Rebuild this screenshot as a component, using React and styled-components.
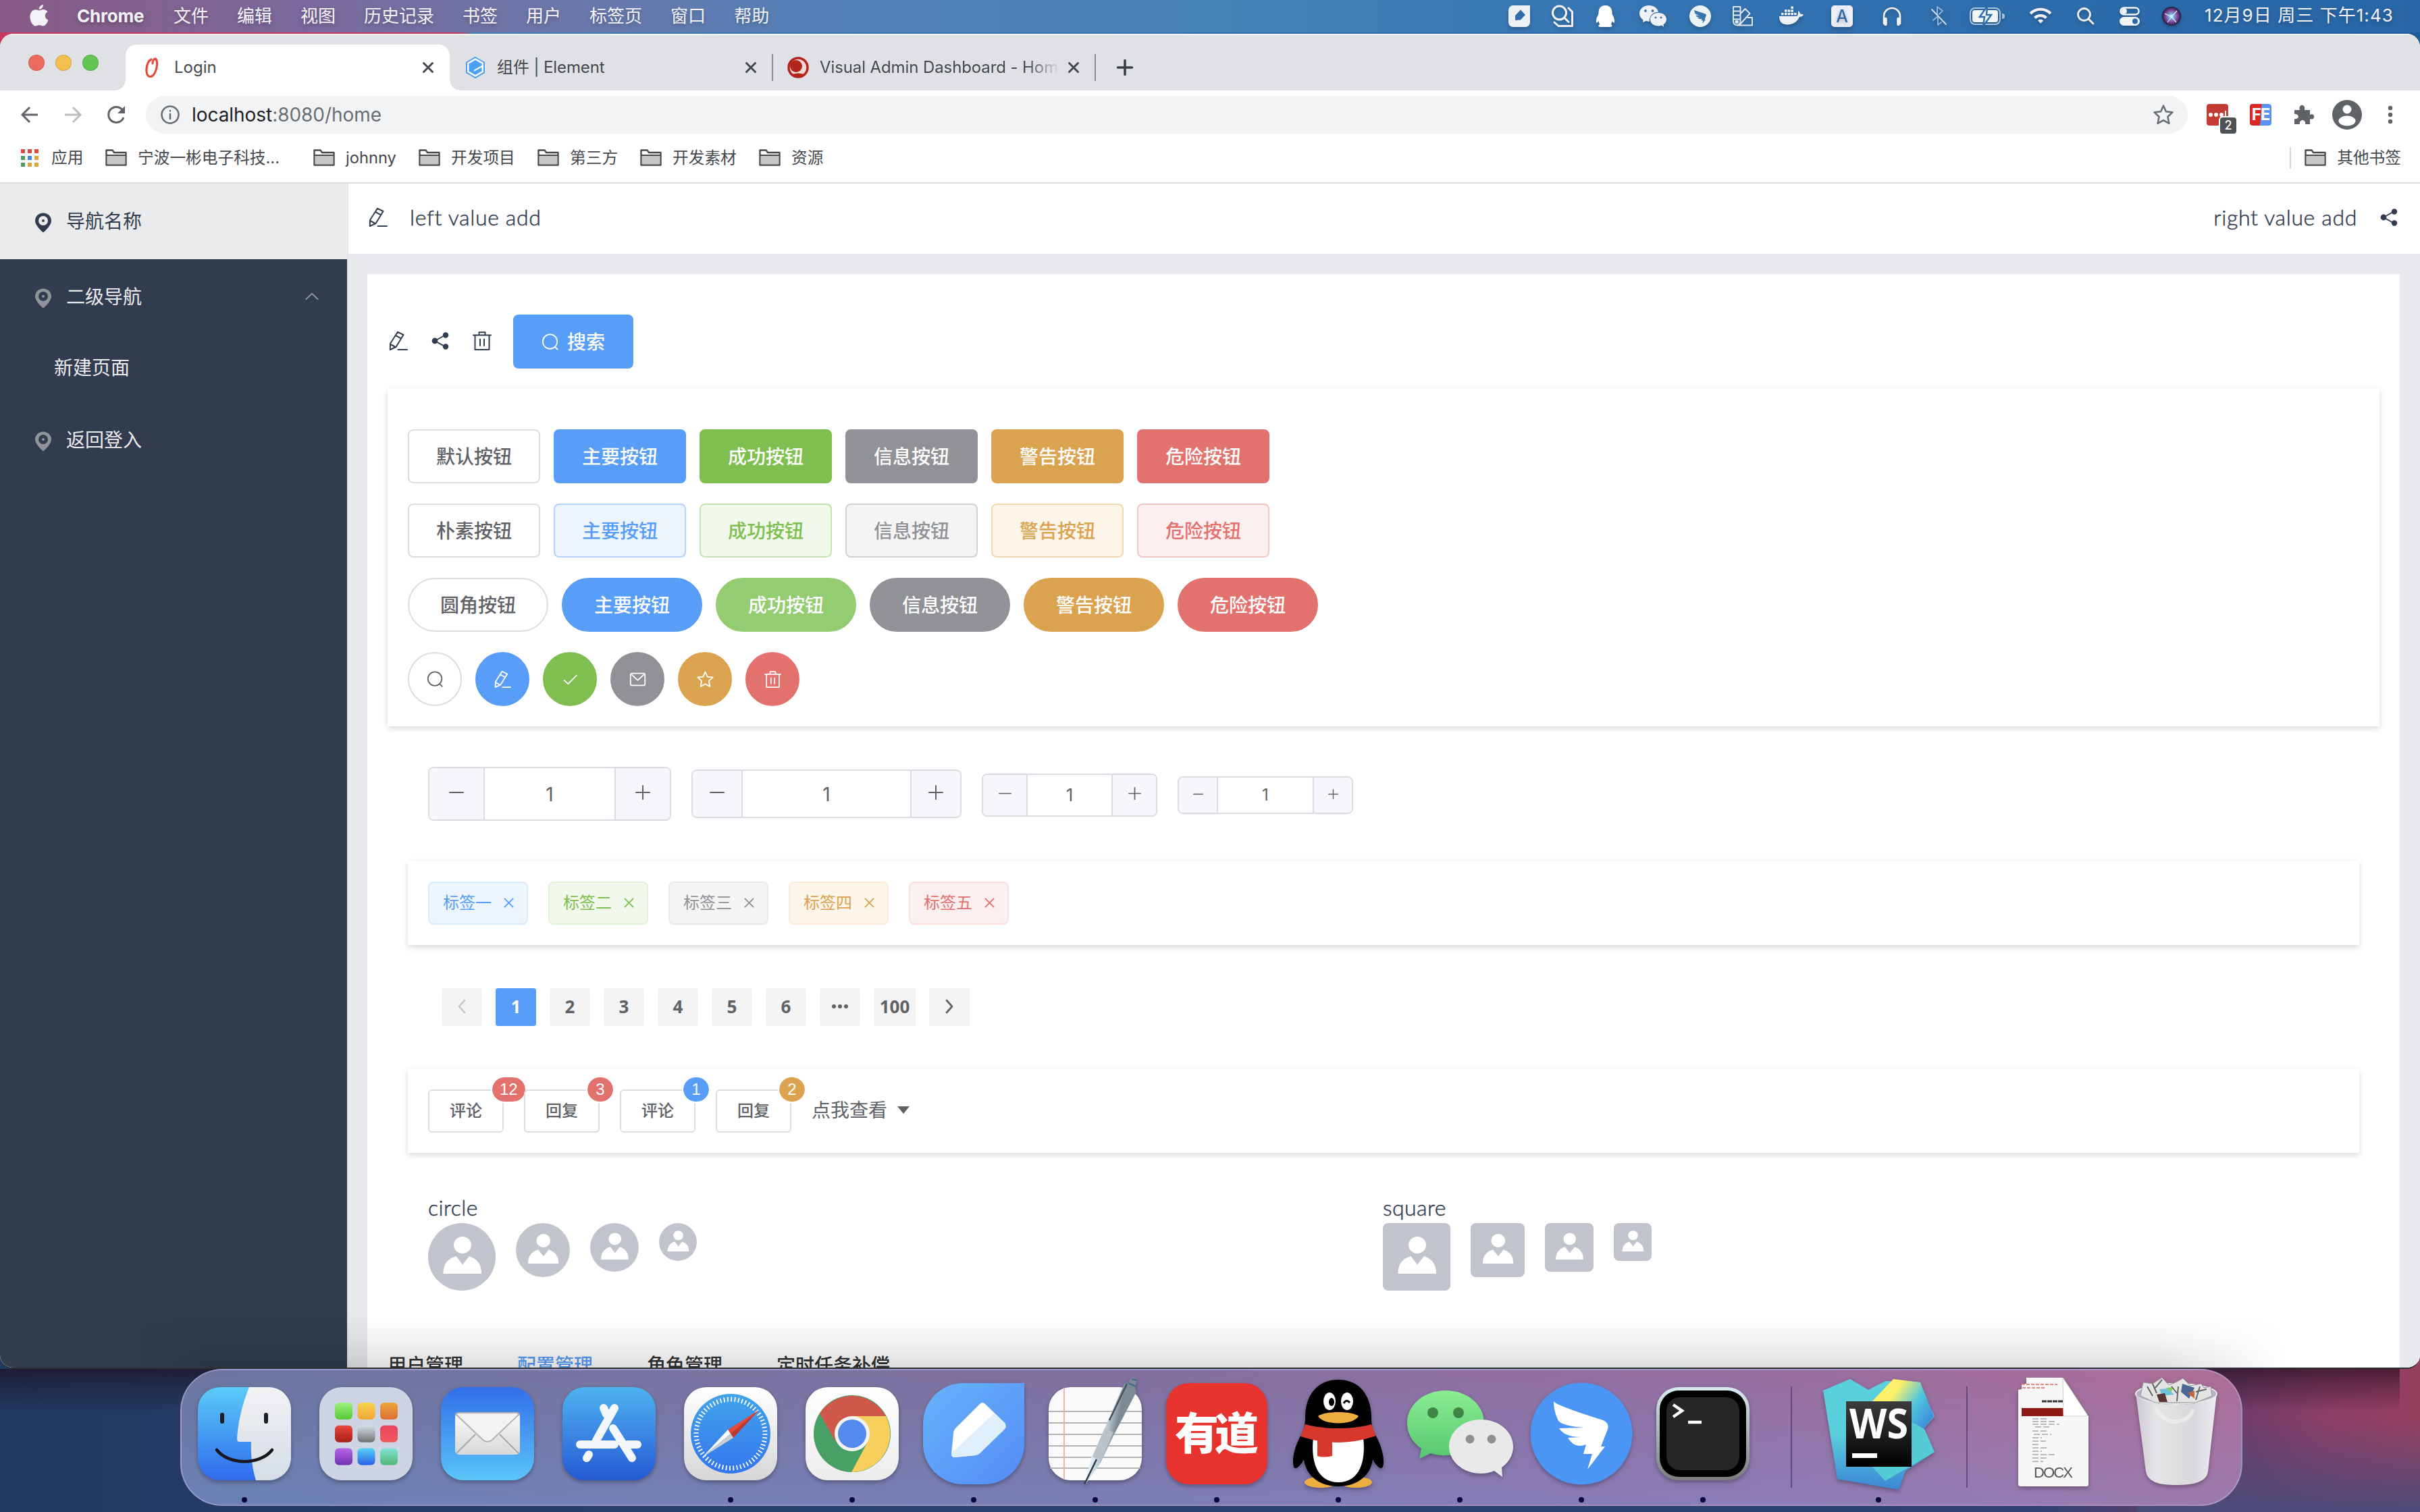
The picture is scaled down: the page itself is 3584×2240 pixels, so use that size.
import React from "react";
import styled, { createGlobalStyle, css } from "styled-components";

const ui = `Inter, "Noto Sans CJK SC", sans-serif`;
const avenir = `Lato, "Noto Sans CJK SC", sans-serif`;

const Global = createGlobalStyle`
  * { box-sizing: border-box; }
  html, body { margin: 0; padding: 0; overflow: hidden; }
  body { font-family: ${ui}; }
  svg { display: block; flex: none; overflow: visible; }
`;

const Desktop = styled.div`
  width: 3584px;
  height: 2240px;
  display: flex;
  flex-direction: column;
  overflow: hidden;
  background:
    linear-gradient(90deg, #c8385f 0 680px, #3d7cb4 700px, #1f5c9c 100%) 0 0 / 100% 130px no-repeat,
    linear-gradient(180deg, rgba(28, 10, 24, 0.62), rgba(28, 10, 24, 0.45) 14px, rgba(28, 10, 24, 0) 64px) 0 2028px / 3554px 212px no-repeat,
    linear-gradient(180deg, rgba(74, 74, 122, 0) 35%, rgba(72, 76, 122, 0.95) 100%) 100% 2028px / 420px 212px no-repeat,
    linear-gradient(90deg, #22395f 0, #27416d 30%, #2f4272 84%, #6b3c68 92%, #8a3e66 96%, #97405f 100%) 0 1900px / 100% 340px no-repeat;
`;

const MenuBar = styled.header`
  height: 48px;
  flex: none;
  display: flex;
  align-items: center;
  padding: 0 38px 0 44px;
  background: linear-gradient(90deg, #895a86 0, #7a699a 12%, #6b78ab 24%, #5580b6 33%, #4682b5 50%, #3878b5 63%, #2f6fae 80%, #2866a6 100%);
  color: #f4f2f7;
  font-size: 26px;
  line-height: 36px;
  text-shadow: 0 3px 6px rgba(0, 0, 0, 0.25);
  white-space: nowrap;
  > svg { margin-bottom: 3px; }
`;

const Menus = styled.nav`
  display: flex;
  gap: 42px;
  margin: 0 0 1px 42px;
`;

const AppName = styled.span`
  width: 101px;
  font-weight: 700;
  letter-spacing: -0.2px;
`;

const Status = styled.div`
  display: flex;
  align-items: center;
  margin-left: auto;
`;

const StatusSlot = styled.span`
  display: block;
  width: ${(p) => p.$w || 32}px;
  margin-left: ${(p) => p.$gap}px;
  filter: drop-shadow(0 3px 3px rgba(0, 0, 0, 0.25));
`;

const Clock = styled.span`
  width: 281px;
  margin: 0 0 2px 35px;
  letter-spacing: 1.05px;
`;

const Window = styled.main`
  position: relative;
  width: 3584px;
  height: 1978px;
  margin-top: 2px;
  flex: none;
  display: flex;
  flex-direction: column;
  border-radius: 20px;
  overflow: hidden;
  background: #fff;
  border-bottom: 2px solid #2f3033;
  &::after {
    content: "";
    position: absolute;
    left: 200px;
    right: 200px;
    bottom: 0;
    height: 76px;
    background: linear-gradient(180deg, rgba(0, 0, 0, 0), rgba(0, 0, 0, 0.05) 50%, rgba(0, 0, 0, 0.13));
    mask-image: linear-gradient(90deg, transparent, #000 110px calc(100% - 190px), transparent);
  }
`;

const TabStrip = styled.div`
  height: 84px;
  flex: none;
  display: flex;
  align-items: flex-end;
  background: #dfe1e5;
  border-top: 2px solid #f2f3f5;
`;

const Lights = styled.div`
  width: 186px;
  height: 68px;
  display: flex;
  gap: 16px;
  padding: 15px 0 0 42px;
`;

const Light = styled.i`
  width: 24px;
  height: 24px;
  border-radius: 50%;
  background: ${(p) => p.$c};
  border: 1px solid rgba(0, 0, 0, 0.12);
`;

const Tab = styled.div`
  position: relative;
  width: ${(p) => p.$w}px;
  height: 68px;
  display: flex;
  align-items: center;
  padding: 0 ${(p) => p.$pr}px 0 ${(p) => p.$pl}px;
  color: #45484c;
  font-size: 24px;
  line-height: 34px;
  ${(p) =>
    p.$active &&
    css`
      background: #fff;
      border-radius: 16px 16px 0 0;
      &::before, &::after {
        content: "";
        position: absolute;
        bottom: 0;
        width: 16px;
        height: 16px;
      }
      &::before { left: -16px; background: radial-gradient(circle at 0 0, transparent 15.5px, #fff 16px); }
      &::after { right: -16px; background: radial-gradient(circle at 100% 0, transparent 15.5px, #fff 16px); }
    `}
`;

const TabTitle = styled.span`
  flex: 1;
  margin: 0 12px 0 16px;
  overflow: hidden;
  white-space: nowrap;
  letter-spacing: ${(p) => p.$ls || 0}px;
  ${(p) => p.$fade && css`mask-image: linear-gradient(90deg, #000 calc(100% - 50px), transparent);`}
`;

const TabRule = styled.i`
  width: 2px;
  height: 40px;
  margin-bottom: 14px;
  background: #8d9095;
`;

const NewTab = styled.div`
  height: 68px;
  display: flex;
  align-items: center;
  padding-left: 31px;
`;

const AddressBar = styled.div`
  height: 72px;
  flex: none;
  display: flex;
  align-items: center;
  padding: 0 28px;
`;

const NavIcons = styled.div`
  width: 188px;
  display: flex;
  gap: 32px;
`;

const Omnibox = styled.div`
  width: 3024px;
  height: 56px;
  display: flex;
  align-items: center;
  border-radius: 28px;
  padding: 0 21px 0 21px;
  background: #f1f3f4;
  color: #6a6e73;
  font-size: 28px;
  line-height: 40px;
  svg:last-child { margin-left: auto; }
`;

const Url = styled.span`
  margin-left: 17px;
  letter-spacing: -0.05px;
  b { color: #202124; font-weight: 400; }
`;

const Extensions = styled.div`
  display: flex;
  align-items: center;
  margin-left: 28px;
`;

const ExtBox = styled.div`
  position: relative;
  width: 32px;
  height: 32px;
  margin-right: 32px;
  border-radius: 4px;
  background: ${(p) => p.$bg};
  color: #fff;
  font-size: 24px;
  line-height: 32px;
  text-align: center;
  font-weight: 700;
  letter-spacing: -1px;
`;

const ExtBadge = styled.span`
  position: absolute;
  left: 20px;
  top: 20px;
  width: 24px;
  height: 24px;
  border-radius: 4px;
  background: #4f5255;
  box-shadow: 0 0 0 2px #fff;
  font-size: 18px;
  line-height: 24px;
  font-weight: 500;
  letter-spacing: 0;
`;

const Bookmarks = styled.div`
  height: 66px;
  flex: none;
  display: flex;
  align-items: center;
  padding: 0 28px 8px 30px;
  border-bottom: 2px solid #dcdde0;
  color: #45484c;
  font-size: 23.7px;
  line-height: 34px;
  white-space: nowrap;
`;

const Bookmark = styled.span`
  display: flex;
  align-items: center;
  gap: ${(p) => p.$gap || 16}px;
  width: ${(p) => p.$w}px;
`;

const OtherBookmarks = styled.span`
  display: flex;
  align-items: center;
  gap: 16px;
  margin-left: auto;
  padding-left: 20px;
  height: 32px;
  border-left: 2px solid #d3d5d8;
`;

const Page = styled.div`
  flex: 1;
  min-height: 0;
  display: flex;
  background: #e8e9ed;
`;

const Sidebar = styled.aside`
  width: 514px;
  flex: none;
  background: #313d4f;
`;

const NavItem = styled.div`
  height: ${(p) => (p.$sub ? 100 : 112)}px;
  display: flex;
  align-items: center;
  gap: 22px;
  padding: 0 40px ${(p) => (p.$sub ? 2 : 0)}px ${(p) => (p.$sub ? 80 : 52)}px;
  font-size: 28px;
  line-height: 40px;
  color: #ececee;
  svg:first-child { margin-top: 4px; }
  svg:last-child:not(:first-child) { margin-left: auto; }
  ${(p) =>
    p.$brand &&
    css`
      background: #e9ebec;
      color: #313d4f;
    `}
`;

const Main = styled.section`
  width: 3070px;
  border-left: 2px solid #e4e5e9;
  display: flex;
  flex-direction: column;
`;

const PageHeader = styled.div`
  height: 104px;
  flex: none;
  display: flex;
  align-items: center;
  justify-content: space-between;
  padding: 0 32px 5px 30px;
  background: #fff;
  font-family: ${avenir};
  font-size: 32px;
  font-weight: 300;
  -webkit-text-stroke: 0.5px currentColor;
  color: #313d4f;
`;

const HeaderSide = styled.div`
  display: flex;
  align-items: center;
  gap: 33px;
  letter-spacing: 0.65px;
`;

const Panel = styled.div`
  width: 3010px;
  flex: 1;
  min-height: 0;
  margin: 30px 0 0 28px;
  padding: 60px 30px 0;
  overflow: hidden;
  background: #fff;
  color: #313d4f;
`;

const Row = styled.div`
  display: flex;
  align-items: ${(p) => p.$align || "center"};
  gap: ${(p) => p.$gap || 0}px;
  margin: ${(p) => p.$m || 0};
  > svg { margin-bottom: ${(p) => p.$lift || 0}px; }
`;

const Card = styled.div`
  display: flex;
  flex-direction: ${(p) => (p.$column ? "column" : "row")};
  gap: 30px;
  height: ${(p) => p.$h}px;
  margin: ${(p) => p.$m};
  padding: ${(p) => p.$p};
  background: #fff;
  box-shadow: 0 4px 8px rgba(0, 0, 0, 0.12), 0 0 12px rgba(0, 0, 0, 0.04);
`;

const tones = {
  default: { c: "#606266", bg: "#fff", bd: "#dcdde4" },
  primary: { c: "#589df8", bg: "#ecf4fe", bd: "#b3d4fb", tag: "#dbe9fd" },
  success: { c: "#7fbf50", bg: "#f1f8ec", bd: "#c6e4b3", tag: "#e2f2d9" },
  info: { c: "#919297", bg: "#f4f4f4", bd: "#d1d2d5", tag: "#e8e9eb" },
  warning: { c: "#dba350", bg: "#fdf5ea", bd: "#f0d8b0", tag: "#f9ecd8" },
  danger: { c: "#e3726e", bg: "#fcefef", bd: "#f2c6c5", tag: "#fae1e0" },
};

const Button = styled.button`
  height: 80px;
  width: ${(p) => (p.$circle ? 80 : p.$round ? 208 : 196)}px;
  padding: ${(p) => (p.$circle ? 0 : 1)}px 0 0;
  display: flex;
  align-items: center;
  justify-content: center;
  gap: 12px;
  border: 2px solid;
  border-radius: ${(p) => (p.$round || p.$circle ? 40 : 8)}px;
  font: 500 28px/40px ${ui};
  color: ${(p) => (p.$plain || p.$tone === "default" ? tones[p.$tone].c : "#fff")};
  background: ${(p) => (p.$plain || p.$tone === "default" ? tones[p.$tone].bg : p.$light ? "#94cc72" : tones[p.$tone].c)};
  border-color: ${(p) => (p.$plain || p.$tone === "default" ? tones[p.$tone].bd : p.$light ? "#94cc72" : tones[p.$tone].c)};
`;

const SearchButton = styled(Button)`
  width: 178px;
  margin-left: 4px;
`;

const Stepper = styled.div`
  display: grid;
  grid-template-columns: ${(p) => p.$b}px 1fr ${(p) => p.$b}px;
  width: ${(p) => p.$w}px;
  height: ${(p) => p.$h}px;
  margin-top: ${(p) => p.$mt}px;
  border: 2px solid #dcdde4;
  border-radius: 8px;
  overflow: hidden;
  color: #606266;
`;

const StepKey = styled.span`
  display: flex;
  align-items: center;
  justify-content: center;
  padding-bottom: ${(p) => p.$lift}px;
  background: #f5f7fb;
  border: 0 solid #dcdde4;
  border-${(p) => p.$side}-width: 2px;
`;

const StepValue = styled.span`
  display: flex;
  align-items: center;
  justify-content: center;
  padding-top: ${(p) => p.$drop}px;
  font: 400 ${(p) => p.$fs}px/36px ${ui};
`;

const Tag = styled.span`
  width: 148px;
  height: 64px;
  display: flex;
  align-items: center;
  gap: 18px;
  padding: 0 0 1px 20px;
  font-size: 24px;
  line-height: 34px;
  border: 2px solid ${(p) => tones[p.$tone].tag};
  border-radius: 8px;
  color: ${(p) => tones[p.$tone].c};
  background: ${(p) => tones[p.$tone].bg};
`;

const PageKey = styled.span`
  width: ${(p) => p.$w || 60}px;
  height: 56px;
  display: flex;
  align-items: center;
  justify-content: center;
  padding-bottom: 2px;
  border-radius: 4px;
  font: 700 26px/36px "Open Sans", sans-serif;
  color: ${(p) => (p.$active ? "#fff" : "#606266")};
  background: ${(p) => (p.$active ? "#589df8" : "#f4f4f5")};
`;

const BadgeButton = styled.div`
  position: relative;
  width: 112px;
  height: 64px;
  display: flex;
  align-items: center;
  justify-content: center;
  border: 2px solid #dcdde4;
  border-radius: 6px;
  font-size: 24px;
  font-weight: 500;
  line-height: 34px;
  color: #606266;
`;

const Badge = styled.sup`
  position: absolute;
  top: -20px;
  left: ${(p) => p.$x}px;
  min-width: 38px;
  height: 36px;
  padding: 0 ${(p) => (p.$wide ? 11 : 10)}px;
  border-radius: 18px;
  text-align: center;
  font: 400 24px/36px "Liberation Sans", sans-serif;
  color: #fff;
  background: ${(p) => tones[p.$tone].c};
  outline: 2px solid #fff;
`;

const Dropdown = styled.span`
  display: flex;
  align-items: center;
  gap: 15px;
  height: 61px;
  font-size: 28px;
  line-height: 40px;
  color: #606266;
`;

const AvatarGroup = styled.div`
  width: 1414px;
  font-family: ${avenir};
  font-size: 32px;
  font-weight: 300;
  -webkit-text-stroke: 0.5px currentColor;
  line-height: 44px;
  letter-spacing: 0.4px;
`;

const GroupName = styled.div`
  height: 44px;
  line-height: 41px;
`;

const Avatar = styled.div`
  width: ${(p) => p.$s}px;
  height: ${(p) => p.$s}px;
  border-radius: ${(p) => (p.$square ? "8px" : "50%")};
  background: #c1c4cc;
`;

const TabLabel = styled.span`
  font-size: 28px;
  font-weight: 500;
  line-height: 40px;
  color: ${(p) => (p.$active ? "#589df8" : "#303133")};
`;

const Dock = styled.footer`
  width: 3054px;
  height: 203px;
  flex: none;
  margin-left: 267px;
  padding: 0 0 0 3px;
  display: flex;
  border: 2px solid rgba(190, 180, 225, 0.5);
  border-radius: 62px;
  background:
    linear-gradient(180deg, rgba(110, 90, 130, 0.12), rgba(105, 145, 215, 0.35)),
    linear-gradient(90deg, #6b79a3 0, #7a77a4 22%, #8174a2 42%, #9272a4 60%, #9b71a4 75%, #b76f98 100%);
`;

const DockSlot = styled.div`
  width: 180px;
  height: 198px;
  display: flex;
  flex-direction: column;
  align-items: center;
  padding-top: 12px;
`;

const Running = styled.i`
  width: 8px;
  height: 8px;
  margin-top: 12px;
  border-radius: 50%;
  background: #06063a;
`;

const DockRule = styled.i`
  width: 2px;
  height: 150px;
  margin: 24px 38px 0 40px;
  background: rgba(60, 40, 100, 0.55);
`;

/* ---------- line icons ---------- */
const Svg = ({ w = 28, h, vb = "0 0 28 28", children, sw = 2, fill = "none", stroke = "currentColor" }) => (
  <svg width={w} height={h || w} viewBox={vb} fill={fill} stroke={stroke} strokeWidth={sw} strokeLinejoin="round" strokeLinecap="round">
    {children}
  </svg>
);
const Edit = ({ s = 28 }) => (
  <Svg w={s}>
    <path d="M13 .8 21.500 5 10.500 23 1.800 27 2 18ZM10 6 18 10.400M3 19.500 9.500 23M13.500 27H27" />
  </Svg>
);
const Share = ({ s = 28 }) => (
  <Svg w={s}>
    <path d="M22 5 6 14 22 23" />
    <g fill="currentColor" stroke="none"><circle cx="22" cy="5.5" r="4.2" /><circle cx="6" cy="14" r="4.4" /><circle cx="22" cy="22.5" r="4.2" /></g>
  </Svg>
);
const Trash = ({ s = 28 }) => (
  <Svg w={s}>
    <path d="M1 5.500H27M9.500 5V1.200H18.500V5M3.500 6V27H24.500V6M11 11.500V21M17 11.500V21" />
  </Svg>
);
const Search = ({ s = 28 }) => (
  <Svg w={s}><circle cx="13.5" cy="13" r="11.5" /><path d="M21.5 21.5 25.5 25.5" /></Svg>
);
const Check = ({ s = 28 }) => <Svg w={s}><path d="M4 15.5 10.5 21.5 24.5 7.5" /></Svg>;
const Mail = ({ s = 28 }) => (
  <Svg w={s}><rect x="2" y="4" width="24" height="20" rx="2.5" /><path d="M4.5 6.5 14 15.5 23.5 6.5" /></Svg>
);
const Star = ({ s = 28, sw = 2 }) => (
  <Svg w={s} sw={sw}><path d="M14 1.5 17.6 9.6 26.5 10.6 20 16.8 21.8 26 14 21.6 6.2 26 8 16.8 1.5 10.6 10.4 9.6Z" /></Svg>
);
const Pin = ({ c, hole }) => (
  <svg width="24" height="30" viewBox="0 0 24 30">
    <path d="M12 .5C5.4 .5 0 5.5 0 12 0 20 12 29.5 12 29.5S24 20 24 12C24 5.5 18.6 .5 12 .5Z" fill={c} />
    <circle cx="12" cy="12" r="7" fill={hole} /><circle cx="12" cy="12" r="2" fill={c} />
  </svg>
);
const Cross = ({ s = 16, sw = 3 }) => <Svg w={s} vb="0 0 16 16" sw={sw}><path d="M1.500 1.500 14.500 14.500M14.500 1.500 1.500 14.500" /></Svg>;
const Minus = ({ s = 22 }) => <Svg w={s} vb="0 0 22 22"><path d="M1 11H21" /></Svg>;
const Plus = ({ s = 22 }) => <Svg w={s} vb="0 0 22 22"><path d="M1 11H21M11 1V21" /></Svg>;
const Folder = () => (
  <svg width="32" height="26" viewBox="0 0 32 26">
    <path d="M1.500 3V23.500H30.500V5H13L10.500 1.500H1.500Z" fill="#fff" stroke="#47494c" strokeWidth="2.400" strokeLinejoin="round" />
    <path d="M2.700 10H29.300V22.300H2.700Z" fill="#c8c8c8" /><path d="M1.500 9H30.500" stroke="#47494c" strokeWidth="2" />
  </svg>
);
const Person = ({ s }) => (
  <svg width={s} height={s} viewBox="0 0 100 100" fill="#fff">
    <ellipse cx="51" cy="32.500" rx="13" ry="12.500" />
    <path d="M22.500 75C22 62 29 52 41.500 49L51 61.500 61 49C73 53 79.500 62 79 75Z" />
  </svg>
);

/* ---------- menu bar status icons: [gap before, width, drawing] ---------- */
const statusIcons = [
  [0, 32, <svg width="32" height="32" viewBox="0 0 32 32"><path d="M7 0H32V25a7 7 0 0 1-7 7H7a7 7 0 0 1-7-7V7a7 7 0 0 1 7-7Z" fill="#ecf1f6" /><path d="M18 6.500 25 14 18 21.500 10 22V15Z" fill="#2f6ea8" /></svg>],
  [32, 32, <Svg w={32} vb="0 0 32 32" sw={3}><circle cx="11.500" cy="11" r="10" /><path d="M19 18.500 25 24.500M4 25 10 30.500H30.500V9.500L25 4" /></Svg>],
  [31, 32, <svg width="32" height="32" viewBox="0 0 32 32" fill="#fff"><path d="M16.500 0C9 0 6.500 5 6.500 11 6.500 15 2 18 3 26 5 26 6.500 23 6.500 23 6.500 26 8.500 28 8.500 28 5.500 29 5.500 32 9.500 32H23.500C27 32 27.500 29 24.500 28 24.500 28 26.500 26 26.500 23 26.500 23 28 26 30 26 31 18 26.500 15 26.500 11 26.500 5 24 0 16.500 0Z" /></svg>],
  [35, 40, <svg width="40" height="32" viewBox="0 0 40 32" fill="#eef2f7"><path d="M14 0C6 0 0 5 0 12 0 16 2 19 5.500 21.500L5 25 10 23C12 23.500 13 24 15 23.800 14 16 20 9.800 28 9.800 27 4 21 0 14 0Z" /><path d="M28 11C21 11 16 15 16 21 16 26 21 30.500 28 30.500 30 30.500 32 30 33 29.500L36 32 35.500 28.500C38 27 40 24 40 21 40 15 35 11 28 11Z" /><g fill="#3a78b2"><circle cx="9" cy="8" r="1.900" /><circle cx="19.500" cy="8" r="1.900" /><circle cx="24" cy="18" r="1.600" /><circle cx="32" cy="18" r="1.600" /></g></svg>],
  [34, 32, <svg width="32" height="32" viewBox="0 0 32 32"><circle cx="16" cy="16" r="16" fill="#ecf1f6" /><path d="M7 7 23.500 12.500Q25.500 13.500 24.500 16L22.500 21H24L19 27 20.500 22.500H18L18.500 20Q14 21 12 18.500L16 18Q10.500 17.500 9.500 15L15 15Q8.500 13.500 8 11Z" fill="#3775b1" /></svg>],
  [32, 32, <Svg w={32} vb="0 0 32 32" sw={2} stroke="#dce7f2"><path d="M1 2H11.500V24A5.200 5.200 0 0 1 1 24ZM1 8.500H11M1 14.500H11M1 20.500H11M12 12 18.500 5 25.500 12 11 28M22.500 18H29V29.500H7" /><circle cx="6.200" cy="24.500" r="1.800" fill="#dce7f2" /></Svg>],
  [37, 36, <svg width="36" height="32" viewBox="0 0 36 32" fill="#eef2f7"><path d="M0 16H26C28 15 28 12 28 8 31 10 31 12 31 13 33 12.500 35 13 36 14 35 16 32 17 30 17 26 25 20 28.500 12 28.500 5 28.500 0 25 0 16Z" /><path d="M3 11H6.500V14.500H3ZM8 11H11.500V14.500H8ZM12.700 11H16.200V14.500H12.700ZM17.400 11H20.900V14.500H17.400ZM22 11H25.500V14.500H22ZM8 6.200H11.500V9.700H8ZM12.700 6.200H16.200V9.700H12.700ZM17.400 6.200H20.900V9.700H17.400ZM17.400 1.500H20.900V5H17.400Z" /></svg>],
  [41, 32, <svg width="32" height="32" viewBox="0 0 32 32"><rect width="32" height="32" rx="5" fill="#eaf0f6" /><text x="16" y="25" textAnchor="middle" fontSize="25" fontWeight="500" fontFamily="Inter, sans-serif" fill="#2d6aa6">A</text></svg>],
  [42, 32, <Svg w={32} vb="0 0 32 32" sw={2.6}><path d="M4 27V16a12 12 0 0 1 24 0V27" /><path d="M6.500 20V28M25.500 20V28" strokeWidth="4.500" /></Svg>],
  [37, 32, <Svg w={32} vb="0 0 32 32" sw={2} stroke="#8fb2d6"><path d="M14 14V2L22 8 17 13M8 22 15 16M15 17V29L20 25" /><path d="M6 6 27 28" stroke="#c9d9ea" /></Svg>],
  [30, 52, <svg width="52" height="26" viewBox="0 0 52 26"><rect x="1" y="1" width="44" height="24" rx="7" fill="none" stroke="#a9c4e0" strokeWidth="2" /><rect x="4" y="4" width="38" height="18" rx="4" fill="#f1f5f9" /><path d="M26-2 15 14H22L20 28 32 11H25Z" fill="#f1f5f9" stroke="#2f6fae" strokeWidth="2.500" /><path d="M48 9a4 4 0 0 1 0 8Z" fill="#a9c4e0" /></svg>],
  [37, 32, <Svg w={32} h={24} vb="0 0 32 24" sw={4}><path d="M1 8a21 21 0 0 1 30 0M7.500 14.500a12 12 0 0 1 17 0" strokeLinecap="butt" /><path d="M16 22 12.500 18.500a5 5 0 0 1 7 0Z" fill="currentColor" strokeWidth="1" /></Svg>],
  [37, 28, <Svg w={28} sw={2.8}><circle cx="11.500" cy="11.500" r="9" /><path d="M18.500 18.500 25 25" /></Svg>],
  [36, 30, <svg width="30" height="28" viewBox="0 0 30 28"><rect x="1.500" y="1.500" width="27" height="10" rx="5" fill="none" stroke="#f1f5f9" strokeWidth="2.500" /><circle cx="7" cy="6.500" r="4" fill="#f1f5f9" /><rect x="0" y="15" width="30" height="13" rx="6.500" fill="#f1f5f9" /><circle cx="23" cy="21.500" r="4" fill="#2b69a8" /></svg>],
  [33, 28, <svg width="28" height="28" viewBox="0 0 28 28"><defs><radialGradient id="siri"><stop offset="0" stopColor="#fff" /><stop offset=".25" stopColor="#77b3d8" /><stop offset=".6" stopColor="#8a4c9f" /><stop offset="1" stopColor="#1c1c3c" /></radialGradient></defs><circle cx="14" cy="14" r="14" fill="url(#siri)" /><path d="M4 10 14 15 22 6M14 15 8 23M14 15 21 23" stroke="#c8f3fb" strokeWidth="1.200" fill="none" /></svg>],
];

/* ---------- dock icons: each drawn on a 180x164 stage ---------- */
const StageSvg = styled.svg`
  filter: drop-shadow(0 3px 3px rgba(0, 0, 0, 0.3));
`;
const Stage = ({ children }) => <StageSvg width="180" height="164" viewBox="0 0 180 164">{children}</StageSvg>;
const Tile = ({ fill }) => <rect x="21" y="13" width="138" height="138" rx="33" fill={fill} />;
const Grad = ({ id, a, b, mid }) => (
  <linearGradient id={id} x1="0" y1="0" x2="0" y2="1"><stop offset="0" stopColor={a} />{mid && <stop offset=".5" stopColor={mid} />}<stop offset="1" stopColor={b} /></linearGradient>
);

const Finder = () => (
  <Stage>
    <defs><Grad id="fa" a="#5bcbf8" b="#2f6bec" /><Grad id="fb" a="#f2f2f4" b="#d5dde6" /><clipPath id="fc"><rect x="21" y="13" width="138" height="138" rx="33" /></clipPath></defs>
    <g clipPath="url(#fc)"><rect x="21" y="13" width="138" height="138" fill="url(#fa)" /><path d="M97 13C86 40 80 68 79 90Q79 94 83 94H100C99 115 102 135 107 151H160V13Z" fill="url(#fb)" /></g>
    <path d="M57 54V64M122 54V64" stroke="#1b1b22" strokeWidth="6" strokeLinecap="round" /><path d="M49 106C67 129 113 129 131 106" fill="none" stroke="#17171c" strokeWidth="4.500" strokeLinecap="round" />
  </Stage>
);
const pads = [["#9cf07a", "#56c93a"], ["#f7d44c", "#f0a638"], ["#eda53b", "#dd6e33"], ["#ea4a3a", "#a81f18"], ["#d3dfe6", "#70716f"], ["#ea4560", "#ee5c5f"], ["#b866e6", "#6e31b0"], ["#55d3f8", "#2b5fe6"], ["#80e3d3", "#52b878"]];
const Launchpad = () => (
  <Stage>
    <defs>{pads.map(([a, b], i) => <Grad key={a} id={`pad${i}`} a={a} b={b} />)}</defs>
    <Tile fill="#ced4e4" />
    {pads.map(([a], i) => <rect key={a} x={44 + (i % 3) * 33.5} y={36 + Math.floor(i / 3) * 33.7} width="26" height="25" rx="6" fill={`url(#pad${i})`} />)}
  </Stage>
);
const MailApp = () => (
  <Stage>
    <defs><Grad id="ma" a="#326eea" b="#5ac5f8" /><Grad id="mb" a="#fafafa" b="#d8d8d8" /></defs><Tile fill="url(#ma)" />
    <rect x="42" y="51" width="96" height="62" rx="6" fill="url(#mb)" />
    <path d="M44 111 72 83M136 111 108 83" stroke="#a8a8a8" strokeWidth="2" /><path d="M43 53 83 91Q90 97 97 91L137 53Q135 51 132 51H48Q45 51 43 53Z" fill="#f3f3f3" stroke="#b4b4b4" strokeWidth="2" />
  </Stage>
);
const AppStore = () => (
  <Stage>
    <defs><Grad id="aa" a="#4db3ee" b="#2459d2" mid="#3c86e4" /></defs><Tile fill="url(#aa)" />
    <g stroke="#f4f8fd" strokeWidth="12" strokeLinecap="round"><path d="M82 44 86 53M98 44 71 92M96 74 124 118M47 98H98M117 98H132M57 118 60 113" /></g>
  </Stage>
);
const Safari = () => (
  <Stage>
    <defs><Grad id="sa" a="#fff" b="#d6d6d6" /><Grad id="sb" a="#42a4ea" b="#3475ee" /></defs><Tile fill="url(#sa)" />
    <circle cx="90" cy="82" r="59" fill="url(#sb)" /><circle cx="90" cy="82" r="51" fill="none" stroke="#fff" strokeWidth="7" strokeDasharray="1.800 3.540" />
    <path d="M132 47 86 76 94 88Z" fill="#e5493c" /><path d="M132 47 90 82 94 88Z" fill="#b93a32" /><path d="M48 117 86 76 90 82Z" fill="#fff" /><path d="M48 117 94 88 90 82Z" fill="#c9ced3" />
  </Stage>
);
const Chrome = () => (
  <Stage>
    <defs><Grad id="ca" a="#fff" b="#ececec" /></defs><Tile fill="url(#ca)" />
    <circle cx="90" cy="82" r="57" fill="#49a066" />
    <path d="M42 52A57 57 0 0 1 140 56H90L65 93Z" fill="#d0584b" /><path d="M140 56A57 57 0 0 1 89 139L112 96 90 56Z" fill="#f8cf5d" />
    <circle cx="90" cy="82" r="26" fill="#f3f3f3" /><circle cx="90" cy="82" r="21" fill="#5489ee" />
  </Stage>
);
const Notes = () => (
  <Stage>
    <defs><linearGradient id="na" x1="0" y1="0" x2="1" y2="1"><stop offset="0" stopColor="#66b3fb" /><stop offset="1" stopColor="#558cf7" /></linearGradient></defs>
    <path d="M75 7H165V97A60 60 0 0 1 105 157H75A60 60 0 0 1 15 97V67A60 60 0 0 1 75 7Z" fill="url(#na)" />
    <path d="M99 38Q103 34 107 38L136 66Q139 71 136 75L99 111Q97 113 93 114L62 117Q57 117 57 112L60 82Q60 77 64 73Z" fill="#fff" /><path d="M120 52 136 66Q139 71 136 75L99 111Q97 113 93 114L62 117Q57 117 57 111Z" fill="#e0effc" />
  </Stage>
);
const TextEdit = () => (
  <Stage>
    <defs><linearGradient id="te" x1="0" y1="0" x2="1" y2=".45"><stop offset=".4" stopColor="#e2eff7" /><stop offset=".54" stopColor="#b4c6d2" /><stop offset=".68" stopColor="#7c8a94" /></linearGradient></defs>
    <Tile fill="#fafafa" /><path d="M21 49H159M21 66H159M21 83H159M21 100H159M21 117H159M23 133H157" stroke="#b3b3b3" strokeWidth="2" /><path d="M44 14V150" stroke="#f0b3ae" strokeWidth="2" />
    <path d="M144-1 152 1 149 14 151 20 117 85 98 125 76 156 74 158 84 118 104 74 133 8 139 6Z" fill="url(#te)" /><path d="M104 74 117 80 98 122 86 116Z" fill="#b9c3c9" />
    <path d="M137 8 111 62" stroke="#42535f" strokeWidth="2.500" /><path d="M92 120 74 157" stroke="#333b40" strokeWidth="2.500" /><path d="M144 1 152 3M139 7 150 12" stroke="#3e678c" strokeWidth="2" />
  </Stage>
);
const Youdao = () => (
  <Stage><rect x="15" y="7" width="150" height="150" rx="34" fill="#e7322e" /><text x="28" y="105" textLength="124" fontSize="65" fontWeight="900" fontFamily='"Noto Sans CJK SC", sans-serif' fill="#fff">有道</text></Stage>
);
const QQ = () => (
  <Stage>
    <g fill="#eeae3f"><ellipse cx="64" cy="154" rx="24" ry="8" /><ellipse cx="116" cy="154" rx="24" ry="8" /></g>
    <path d="M90 2C58 2 41 26 41 58 41 68 40 72 36 82 28 95 20 118 24 131 27 137 35 128 39 120 42 144 62 160 90 160S138 144 141 120C145 128 153 137 156 131 160 118 152 95 144 82 140 72 139 68 139 58 139 26 122 2 90 2Z" fill="#000" />
    <path d="M53 88H127C131 122 122 154 90 154S49 122 53 88Z" fill="#fff" /><g fill="#fff"><ellipse cx="77" cy="34" rx="9" ry="13" /><ellipse cx="103" cy="34" rx="9" ry="13" /></g>
    <ellipse cx="80" cy="35" rx="4" ry="6" /><path d="M98 37Q102 30 107 36" fill="none" stroke="#000" strokeWidth="3" /><path d="M60 56C70 48 110 48 120 56 112 70 68 70 60 56Z" fill="#eeae3f" />
    <path d="M41 68C70 76 110 76 139 68L146 85C110 98 70 98 34 86Z" fill="#d6382e" /><path d="M59 92 81 94V115Q68 118 59 115Z" fill="#d6382e" />
  </Stage>
);
const WeChat = () => (
  <Stage>
    <defs><Grad id="wa" a="#8bed91" b="#56c871" /></defs>
    <path d="M69 18C37 18 12 39 12 66 12 82 20 95 33 104L30 119 47 111Q58 115 69 114C101 114 126 93 126 66S101 18 69 18Z" fill="url(#wa)" /><path d="M121 61C95 61 74 79 74 101S95 141 121 141Q132 141 141 137L153 146 152 132C162 125 169 114 169 101 169 79 148 61 121 61Z" fill="#e9e9ea" />
    <g fill="#3f8547"><circle cx="50" cy="51" r="8" /><circle cx="88" cy="51" r="8" /></g><g fill="#909090"><circle cx="105" cy="90" r="6.500" /><circle cx="137" cy="90" r="6.500" /></g>
  </Stage>
);
const DingTalk = () => (
  <Stage><circle cx="90" cy="82" r="75.500" fill="#4b95f4" /><path d="M49 34Q52 40 122 62 133 67 128 78L119 101H125L99 135 106 112H93L97 98Q80 105 70 88L90 87Q65 87 57 74L94 73Q58 70 55 61Q49 48 49 34Z" fill="#fff" /></Stage>
);
const Terminal = () => (
  <Stage>
    <defs><Grad id="ta" a="#d6eaf1" b="#7c7c7c" /></defs><Tile fill="url(#ta)" /><rect x="26" y="18" width="128" height="128" rx="28" fill="#000" /><rect x="36" y="28" width="108" height="108" rx="20" fill="#262626" />
    <path d="M46 39 59 48 46 57M68 65H88" fill="none" stroke="#fff" strokeWidth="4.500" />
  </Stage>
);
const WebStorm = () => (
  <Stage>
    <defs><linearGradient id="wy" x1="0" y1="0" x2="1" y2=".6"><stop offset=".4" stopColor="#fdf06a" /><stop offset=".72" stopColor="#4fc6dc" /><stop offset="1" stopColor="#3f92dc" /></linearGradient><Grad id="wb" a="#5ad0dc" b="#3b86d6" mid="#5ad0dc" /><Grad id="wk" a="#3c3c3c" b="#000" /></defs>
    <path d="M8 18 48 1 75 17 100 4 148 5 173 56 154 78 173 109 130 137 120 165 29 149Z" fill="url(#wb)" /><path d="M75 40 112 1 152 6 172 56 150 84Z" fill="url(#wy)" /><path d="M158 75 173 109 100 152 70 120 130 60Z" fill="#56cbd8" />
    <rect x="42" y="34" width="97" height="97" fill="url(#wk)" />
    <text x="47" y="89" textLength="87" lengthAdjust="spacingAndGlyphs" fontSize="60" fontWeight="700" fontFamily='"Open Sans", sans-serif' fill="#fff">WS</text><rect x="51" y="111" width="37" height="7" fill="#fff" />
  </Stage>
);
const Docx = () => (
  <Stage>
    <path d="M49-1H103L105 9 132 55H141V157Q141 160 138 160H40Q37 160 37 157V17L42 16V8H49Z" fill="#f7f7f7" />
    <path d="M42 9H95M43 14H78" stroke="#df8c86" strokeWidth="2" strokeDasharray="5 2" /><path d="M72 34H104" stroke="#333" strokeWidth="3" strokeDasharray="7 1" /><rect x="42" y="44" width="62" height="12" fill="#8a1a12" />
    <g stroke="#a8a8a8" strokeWidth="1.500"><path d="M58 60H80M58 64H92M58 68H98M62 72H84M58 78H80M60 83H86M58 88H72M58 93H78M58 98H70M58 103H82M58 108H72M58 113H92M58 118H80M58 123H74" strokeDasharray="9 3" /></g>
    <path d="M103-1 138 52Q142 57 134 56L104 56Z" fill="#fff" stroke="#d2d2d2" />
    <text x="60" y="147" textLength="58" fontSize="22" fontFamily='"Liberation Sans", sans-serif' fill="#565656">DOCX</text>
  </Stage>
);
const Bin = () => (
  <Stage>
    <defs><linearGradient id="ba"><stop offset="0" stopColor="#cfcbd6" /><stop offset=".25" stopColor="#e9e9ea" /><stop offset=".7" stopColor="#dcdbde" /><stop offset="1" stopColor="#f0eff3" /></linearGradient></defs>
    <ellipse cx="91" cy="23" rx="60" ry="15" fill="#b9b1c5" stroke="#eee" strokeWidth="2" />
    <path d="M38 26 42 6 56 8 70-1 80 10 90 6 101 0 112 11 128 8 132 14 142 12 144 26 120 36 60 36Z" fill="#e4e4e4" stroke="#999" />
    <path d="M66 16 78 15 88 24 70 26Z" fill="#6fc4d9" /><path d="M76 14 86 13 84 20Z" fill="#86c95c" /><path d="M100 8 118 14 110 30 98 20Z" fill="#4b6594" /><path d="M62 24 74 22 78 35 66 35Z" fill="#5a3230" /><path d="M108 22 118 18 118 30Z" fill="#c8663a" />
    <path d="M48 12 56 26M56 8 62 22M70 2 60 14M94 12 92 34M120 20 136 16M84 12 92 22M126 12 120 32" stroke="#666" strokeWidth="2" />
    <path d="M31 22C34 34 64 39 91 39S148 34 151 22L138 138C136 153 118 158 91 158S49 153 46 138Z" fill="url(#ba)" opacity=".97" /><path d="M60 44Q74 66 92 64T116 46" stroke="#f1f1f1" strokeWidth="6" fill="none" opacity=".7" />
  </Stage>
);

const dock = [
  [Finder, 1], [Launchpad, 0], [MailApp, 0], [AppStore, 0], [Safari, 1], [Chrome, 1], [Notes, 1], [TextEdit, 1], [Youdao, 1],
  [QQ, 1], [WeChat, 1], [DingTalk, 1], [Terminal, 1], null, [WebStorm, 1], null, [Docx, 0], [Bin, 0],
];

const order = ["default", "primary", "success", "info", "warning", "danger"];
const names = ["主要按钮", "成功按钮", "信息按钮", "警告按钮", "危险按钮"];
const circles = [Search, Edit, Check, Mail, Star, Trash];
const steppers = [
  { w: 360, h: 80, b: 82, mt: 0, fs: 28, i: 22, lift: 4, drop: 2 },
  { w: 400, h: 72, b: 74, mt: 4, fs: 28, i: 22, lift: 5, drop: 2 },
  { w: 260, h: 64, b: 66, mt: 10, fs: 26, i: 19, lift: 5, drop: 0 },
  { w: 260, h: 56, b: 58, mt: 14, fs: 24, i: 15, lift: 3, drop: 0 },
];
const tags = [["标签一", "primary"], ["标签二", "success"], ["标签三", "info"], ["标签四", "warning"], ["标签五", "danger"]];
const badges = [["评论", "12", "danger", 93], ["回复", "3", "danger", 92], ["评论", "1", "primary", 92], ["回复", "2", "warning", 92]];
const folders = [["宁波一彬电子科技...", 308], ["johnny", 156], ["开发项目", 176], ["第三方", 152], ["开发素材", 176], ["资源", 110]];
const appDots = ["#dd4b3e", "#dd4b3e", "#dd4b3e", "#4f9a62", "#4486f0", "#e0a33a", "#4f9a62", "#e0a33a", "#e0a33a"];

export default function App() {
  return (
    <Desktop>
      <Global />
      <MenuBar>
        <svg width="28" height="32" viewBox="0 0 28 32" fill="currentColor">
          <path d="M14 8.500C15.500 8.500 17.500 7 20 7 23 7 25.200 8.500 26.500 10.500 21 13.500 22 20.500 27.500 22.700 26 27 22.800 31.500 20 31.500 17.800 31.500 17 30.300 14.300 30.300S10.500 31.500 8.600 31.500C4.500 31.500 .5 24.500 .5 18 .5 11 4.500 7.300 8.500 7.300 11 7.300 12.700 8.500 14 8.500ZM13.600 7C13.600 3.500 16.500 .4 19.800 0 20.300 3.700 17.300 7 13.600 7Z" />
        </svg>
        <Menus>
          <AppName>Chrome</AppName>
          {["文件", "编辑", "视图", "历史记录", "书签", "用户", "标签页", "窗口", "帮助"].map((t) => <span key={t}>{t}</span>)}
        </Menus>
        <Status>
          {statusIcons.map(([gap, w, icon], i) => <StatusSlot key={i} $gap={gap} $w={w}>{icon}</StatusSlot>)}
          <Clock>12月9日 周三 下午1:43</Clock>
        </Status>
      </MenuBar>

      <Window>
        <TabStrip>
          <Lights><Light $c="#ed6a5e" /><Light $c="#f5bf4f" /><Light $c="#62c554" /></Lights>
          <Tab $active $w={480} $pl={24} $pr={24}>
            <Svg w={32} vb="0 0 32 32" sw={3.2} stroke="#e04a3f"><path d="M14 4C6 8 4 28 12 29.500 21 30 26 6 20 3 17.500 3 16 7 16 10" /></Svg>
            <TabTitle>Login</TabTitle><Cross />
          </Tab>
          <Tab $w={477} $pl={22} $pr={23}>
            <svg width="32" height="32" viewBox="0 0 32 32"><path d="M16 1 29 8.500V23.500L16 31 3 23.500V8.500Z" fill="#fff" stroke="#4a9ff5" strokeWidth="2" /><path d="M16 5 25.500 10.500V13L14 19.500V22L25.500 15.500V21.500L16 27 6.500 21.500V10.500Z" fill="#4a9ff5" /></svg>
            <TabTitle $ls={-0.1}>组件 | Element</TabTitle><Cross />
          </Tab>
          <TabRule />
          <Tab $w={476} $pl={21} $pr={23}>
            <svg width="32" height="32" viewBox="0 0 32 32"><circle cx="16" cy="16" r="14" fill="#f2dad8" stroke="#b3251b" strokeWidth="3.500" /><circle cx="13" cy="14" r="9" fill="#b3251b" /><path d="M7 26Q16 23 25 26L20 31H12Z" fill="#b3251b" /></svg>
            <TabTitle $fade $ls={-0.1}>Visual Admin Dashboard - Home</TabTitle><Cross />
          </Tab>
          <TabRule />
          <NewTab><Svg w={24} vb="0 0 24 24" sw={3.6}><path d="M1.500 12H22.500M12 1.500V22.500" stroke="#3c4043" /></Svg></NewTab>
        </TabStrip>

        <AddressBar>
          <NavIcons>
            <Svg w={32} vb="0 0 32 32" sw={3} stroke="#5f6368"><path d="M28 16H5M16 5 5 16 16 27" strokeLinecap="butt" strokeLinejoin="miter" /></Svg>
            <Svg w={32} vb="0 0 32 32" sw={3} stroke="#bbbdc0"><path d="M4 16H27M16 5 27 16 16 27" strokeLinecap="butt" strokeLinejoin="miter" /></Svg>
            <Svg w={32} vb="0 0 32 32" sw={3} stroke="#5f6368"><path d="M27 20A11.500 11.500 0 1 1 25 8.500" strokeLinecap="butt" /><path d="M29 3V14H18Z" fill="#5f6368" stroke="none" /></Svg>
          </NavIcons>
          <Omnibox>
            <Svg w={30} vb="0 0 30 30" sw={2.6}><circle cx="15" cy="15" r="12.500" /><path d="M15 14V21M15 9V9.500" /></Svg>
            <Url><b>localhost</b>:8080/home</Url>
            <Star s={30} sw={2.4} />
          </Omnibox>
          <Extensions>
            <ExtBox $bg="#c43b31">
              <svg width="32" height="32" viewBox="0 0 32 32" fill="#fff"><circle cx="6" cy="16" r="3" /><circle cx="14" cy="16" r="3" /><circle cx="22" cy="16" r="3" /><path d="M27 10H29V18H27Z" /></svg>
              <ExtBadge>2</ExtBadge>
            </ExtBox>
            <ExtBox $bg="linear-gradient(95deg, #d8281f 50%, #5a93ef 52%)">FE</ExtBox>
            <svg width="32" height="30" viewBox="0 0 32 30" fill="#5f6368"><path d="M2 8H10C8 2 13-1 16 2 18 4 17 6 17 8H25V15C29 13 32 16 31 19 30 22 27 22 25 21V29H18C19 25 16 23 14 23S9 25 10 29H2V21C6 22 8 19 8 18S6 13 2 14Z" /></svg>
            <Row $m="0 0 0 26px">
              <svg width="44" height="44" viewBox="0 0 44 44"><circle cx="22" cy="22" r="22" fill="#5f6368" /><circle cx="22" cy="14" r="6.500" fill="#fff" /><ellipse cx="22" cy="31" rx="12.500" ry="7.500" fill="#fff" /></svg>
            </Row>
            <Row $m="0 0 0 38px">
              <svg width="8" height="28" viewBox="0 0 8 28" fill="#5f6368"><circle cx="4" cy="4" r="3.200" /><circle cx="4" cy="14" r="3.200" /><circle cx="4" cy="24" r="3.200" /></svg>
            </Row>
          </Extensions>
        </AddressBar>

        <Bookmarks>
          <Bookmark $w={126} $gap={18}>
            <svg width="28" height="26" viewBox="0 0 28 26">{appDots.map((c, i) => <rect key={i} x={1 + (i % 3) * 10} y={Math.floor(i / 3) * 10} width="6" height="6" fill={c} />)}</svg>
            <span>应用</span>
          </Bookmark>
          {folders.map(([t, w]) => <Bookmark key={t} $w={w}><Folder /><span>{t}</span></Bookmark>)}
          <OtherBookmarks><Folder /><span>其他书签</span></OtherBookmarks>
        </Bookmarks>

        <Page>
          <Sidebar>
            <NavItem $brand><Pin c="#313d4f" hole="#e9ebec" /><span>导航名称</span></NavItem>
            <NavItem>
              <Pin c="#909399" hole="#313d4f" /><span>二级导航</span>
              <Svg w={24} vb="0 0 24 24"><path d="M3.500 15 12 7 20.500 15" stroke="#909399" /></Svg>
            </NavItem>
            <NavItem $sub><span>新建页面</span></NavItem>
            <NavItem><Pin c="#909399" hole="#313d4f" /><span>返回登入</span></NavItem>
          </Sidebar>
          <Main>
            <PageHeader>
              <HeaderSide><Edit /><span>left value add</span></HeaderSide>
              <HeaderSide><span>right value add</span><Share /></HeaderSide>
            </PageHeader>
            <Panel>
              <Row $gap={34} $m="0 0 30px 2px" $lift={3}>
                <Edit /><Share /><Trash />
                <Row $m="0 0 0 -6px"><SearchButton $tone="primary"><Search s={26} />搜索</SearchButton></Row>
              </Row>

              <Card $column $h={500} $p="60px 30px 0">
                <Row $gap={20}>{order.map((t, i) => <Button key={t} $tone={t}>{["默认按钮", ...names][i]}</Button>)}</Row>
                <Row $gap={20}>{order.map((t, i) => <Button key={t} $tone={t} $plain>{["朴素按钮", ...names][i]}</Button>)}</Row>
                <Row $gap={20}>{order.map((t, i) => <Button key={t} $tone={t} $round $light={t === "success"}>{["圆角按钮", ...names][i]}</Button>)}</Row>
                <Row $gap={20}>{order.map((t, i) => { const Icon = circles[i]; return <Button key={t} $tone={t} $circle><Icon s={25} /></Button>; })}</Row>
              </Card>

              <Row $gap={30} $m="60px 0 0 60px" $align="flex-start">
                {steppers.map((s, i) => (
                  <Stepper key={i} $w={s.w} $h={s.h} $b={s.b} $mt={s.mt}>
                    <StepKey $side="right" $lift={s.lift}><Minus s={s.i} /></StepKey>
                    <StepValue $fs={s.fs} $drop={s.drop}>1</StepValue>
                    <StepKey $side="left" $lift={s.lift}><Plus s={s.i} /></StepKey>
                  </Stepper>
                ))}
              </Row>

              <Card $h={124} $m="60px 30px 0" $p="30px">
                {tags.map(([t, tone]) => <Tag key={t} $tone={tone}>{t}<Cross s={15} sw={2} /></Tag>)}
              </Card>

              <Row $gap={20} $m="64px 0 0 80px">
                <PageKey><Svg w={24} vb="0 0 24 24" sw={2.4}><path d="M16 3 8 12 16 21" stroke="#c0c4cc" /></Svg></PageKey>
                <PageKey $active>1</PageKey>
                {[2, 3, 4, 5, 6].map((n) => <PageKey key={n}>{n}</PageKey>)}
                <PageKey><svg width="26" height="8" viewBox="0 0 26 8" fill="currentColor"><circle cx="4" cy="4" r="3" /><circle cx="13" cy="4" r="3" /><circle cx="22" cy="4" r="3" /></svg></PageKey>
                <PageKey $w={62}>100</PageKey>
                <PageKey><Svg w={24} vb="0 0 24 24" sw={2.8}><path d="M8 3 16 12 8 21" /></Svg></PageKey>
              </Row>

              <Card $h={124} $m="64px 30px 0" $p="30px">
                {badges.map(([t, n, tone, x], i) => <BadgeButton key={i}>{t}<Badge $tone={tone} $x={x} $wide={n.length > 1}>{n}</Badge></BadgeButton>)}
                <Dropdown>点我查看<svg width="18" height="11" viewBox="0 0 18 11" fill="currentColor"><path d="M0 0H18L9 11Z" /></svg></Dropdown>
              </Card>

              <Row $m="60px 0 0 60px">
                {["circle", "square"].map((kind) => (
                  <AvatarGroup key={kind}>
                    <GroupName>{kind}</GroupName>
                    <Row $gap={30} $align="flex-start">
                      {[100, 80, 72, 56].map((s) => <Avatar key={s} $s={s} $square={kind === "square"}><Person s={s} /></Avatar>)}
                    </Row>
                  </AvatarGroup>
                ))}
              </Row>

              <Row $gap={80} $m="91px 0 0">
                {["用户管理", "配置管理", "角色管理", "定时任务补偿"].map((t, i) => <TabLabel key={t} $active={i === 1}>{t}</TabLabel>)}
              </Row>
            </Panel>
          </Main>
        </Page>
      </Window>

      <Dock>
        {dock.map((d, i) => {
          if (!d) return <DockRule key={i} />;
          const [Icon, running] = d;
          return <DockSlot key={i}><Icon />{running ? <Running /> : null}</DockSlot>;
        })}
      </Dock>
    </Desktop>
  );
}
